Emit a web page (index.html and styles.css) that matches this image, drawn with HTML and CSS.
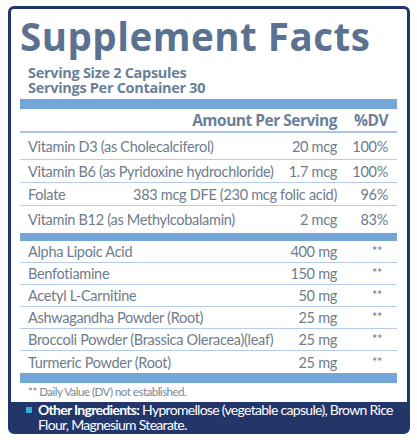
FILE: index.html
```html
<!DOCTYPE html>
<html>
<head>
<link rel="stylesheet" href="styles.css">
</head>
<body>

<div class="label">
  <div class="panel">
    <h1 class="title">Supplement Facts</h1>
    <p class="serving">Serving Size 2 Capsules<br>Servings Per Container 30</p>
    <div class="bar"></div>

    <div class="row head">
      <span class="name"></span>
      <span class="amt">Amount Per Serving</span>
      <span class="dv">%DV</span>
    </div>
    <div class="row tall">
      <span class="name">Vitamin D3 (as Cholecalciferol)</span>
      <span class="amt">20 mcg</span>
      <span class="dv">100%</span>
    </div>
    <div class="row mid">
      <span class="name">Vitamin B6 (as Pyridoxine hydrochloride)</span>
      <span class="amt">1.7 mcg</span>
      <span class="dv">100%</span>
    </div>
    <div class="row mid">
      <span class="name">Folate</span>
      <span class="amt">383 mcg DFE (230 mcg folic acid)</span>
      <span class="dv">96%</span>
    </div>
    <div class="row last tall">
      <span class="name">Vitamin B12 (as Methylcobalamin)</span>
      <span class="amt">2 mcg</span>
      <span class="dv">83%</span>
    </div>

    <div class="bar thin"></div>

    <div class="row">
      <span class="name">Alpha Lipoic Acid</span>
      <span class="amt">400 mg</span>
      <span class="dv star">**</span>
    </div>
    <div class="row">
      <span class="name">Benfotiamine</span>
      <span class="amt">150 mg</span>
      <span class="dv star">**</span>
    </div>
    <div class="row">
      <span class="name">Acetyl L-Carnitine</span>
      <span class="amt">50 mg</span>
      <span class="dv star">**</span>
    </div>
    <div class="row">
      <span class="name">Ashwagandha Powder (Root)</span>
      <span class="amt">25 mg</span>
      <span class="dv star">**</span>
    </div>
    <div class="row">
      <span class="name">Broccoli Powder (Brassica Oleracea)(leaf)</span>
      <span class="amt">25 mg</span>
      <span class="dv star">**</span>
    </div>
    <div class="row last">
      <span class="name">Turmeric Powder (Root)</span>
      <span class="amt">25 mg</span>
      <span class="dv star">**</span>
    </div>

    <div class="bar end"></div>
    <p class="note">** Daily Value (DV) not established.</p>
  </div>

  <div class="other">
    <span class="dot"></span>
    <p><b>Other Ingredients:</b> Hypromellose (vegetable capsule), Brown Rice Flour, Magnesium Stearate.</p>
  </div>
</div>

</body>
</html>
```

FILE: styles.css
```css
* {
  box-sizing: border-box;
}

body {
  margin: 0;
  padding: 6px 7px 6px 8px;
  background: #fff;
  font-family: "Lato", "Liberation Sans", sans-serif;
}

.label {
  width: 402px;
  height: 428px;
  border: 3px solid #23366a;
  border-radius: 6px;
  background: #23366a;
}

.panel {
  background: #fff;
  padding: 0 10px 0 9px;
  height: 393px;
  border-radius: 3px 3px 0 0;
}

.title {
  margin: 0;
  padding-top: 3px;
  font-family: "Open Sans", "Liberation Sans", sans-serif;
  font-size: 38.5px;
  line-height: 48px;
  font-weight: 700;
  color: #5a7190;
  letter-spacing: 0.5px;
  white-space: nowrap;
}

.serving {
  margin: 5px 0 0 8px;
  font-family: "Open Sans", "Liberation Sans", sans-serif;
  font-size: 14.5px;
  line-height: 15px;
  font-weight: 700;
  color: #6a7f9a;
  letter-spacing: -0.3px;
}

.bar {
  height: 10px;
  margin-top: 4px;
  background: #74a6d8;
}

.bar.thin {
  height: 8px;
  margin-top: 0;
}

.bar.end {
  margin-top: 0;
}

/* ingredient rows */
.row {
  display: flex;
  align-items: center;
  height: 22px;
  padding: 0 9px 0 8px;
  border-bottom: 1.5px solid #b3cde9;
  font-size: 14.5px;
  color: #6e7c8d;
  letter-spacing: -0.3px;
  white-space: nowrap;
}

.row.mid {
  height: 23px;
}

.row.tall {
  height: 27px;
}

.row.last {
  border-bottom: none;
}

.row.head {
  height: 24px;
  border-bottom: 2.5px solid #a7c6e6;
  font-family: "Open Sans", "Liberation Sans", sans-serif;
  font-size: 15.5px;
  font-weight: 700;
  color: #6a7f9a;
  letter-spacing: -0.5px;
}

.name {
  flex: 1;
}

.amt {
  text-align: right;
}

.dv {
  width: 51px;
  text-align: right;
}

.star {
  padding-right: 6px;
  font-size: 12.5px;
}

.note {
  margin: 2px 0 0 8px;
  font-size: 11.5px;
  color: #7a8696;
  letter-spacing: -0.5px;
}

.other {
  display: flex;
  align-items: flex-start;
  padding: 0 8px 0 15px;
  color: #fff;
}

.dot {
  flex: none;
  width: 6px;
  height: 6px;
  margin-top: 5px;
  margin-right: 6px;
  background: #2fb2d6;
}

.other p {
  margin: 0;
  font-size: 14px;
  line-height: 15px;
  letter-spacing: -0.7px;
}
```
